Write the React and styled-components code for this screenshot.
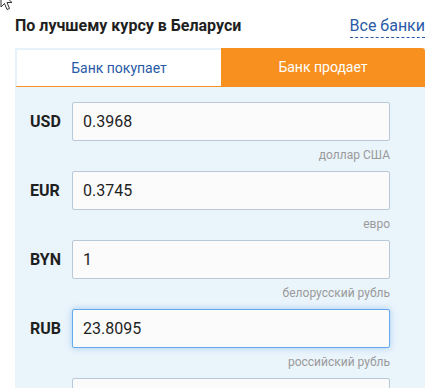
import React, { useEffect, useRef } from 'react';
import styled, { createGlobalStyle } from 'styled-components';

const GlobalStyle = createGlobalStyle`
  html, body {
    margin: 0;
    padding: 0;
    background: #ffffff;
    font-family: Roboto, 'Liberation Sans', Arial, sans-serif;
    overflow: hidden;
  }
`;

const Page = styled.div`
  position: relative;
  width: 410px;
  margin-left: 15px;
`;

const Pointer = styled.svg`
  position: absolute;
  top: -9px;
  left: -15px;
  width: 13px;
  height: 20px;
`;

const Header = styled.div`
  display: flex;
  justify-content: space-between;
  align-items: flex-start;
  padding-top: 15px;
  margin-bottom: 10px;
`;

const Title = styled.h2`
  margin: 0;
  font-size: 16px;
  line-height: 22px;
  font-weight: 700;
  color: #1f1f1f;
`;

const AllBanks = styled.a`
  font-size: 16px;
  line-height: 22px;
  color: #2a5aa6;
  text-decoration: none;
  border-bottom: 1px dashed #2a5aa6;
  cursor: pointer;
`;

const Panel = styled.section`
  background: #eaf4fb;
`;

const Tabs = styled.div`
  display: flex;
  height: 39px;
`;

const Tab = styled.button`
  flex: 1;
  border: none;
  margin: 0;
  padding: 0;
  font-family: inherit;
  font-size: 14px;
  cursor: pointer;
  background: ${(p) => (p.$active ? '#f7901e' : '#ffffff')};
  color: ${(p) => (p.$active ? '#ffffff' : '#2a5aa6')};
  border-top: ${(p) => (p.$active ? 'none' : '2px solid #e6f2fa')};
  border-left: ${(p) => (p.$active ? 'none' : '2px solid #e6f2fa')};
  border-bottom: 1px solid #f7901e;
  border-radius: ${(p) => (p.$active ? '0 3px 0 0' : '3px 0 0 0')};
`;

const Body = styled.div`
  padding: 15px 35px 0 15px;
`;

const Row = styled.div`
  display: grid;
  grid-template-columns: 42px 1fr;
  align-items: center;
  margin-bottom: 8px;
`;

const Code = styled.label`
  font-size: 16px;
  font-weight: 700;
  color: #1f1f1f;
`;

const Field = styled.input`
  box-sizing: border-box;
  width: 100%;
  height: 39px;
  padding: 0 10px;
  font-family: inherit;
  font-size: 16px;
  color: #1f1f1f;
  background: #fbfbfb;
  border: 1px solid ${(p) => (p.$focused ? '#66a9ec' : '#b9c9d8')};
  border-radius: 2px;
  box-shadow: ${(p) => (p.$focused ? '0 0 6px rgba(102, 169, 236, 0.55)' : 'none')};
  outline: none;
  caret-color: #000;
`;

const Name = styled.div`
  grid-column: 2;
  margin-top: 6px;
  text-align: right;
  font-size: 12px;
  line-height: 16px;
  color: #9a9a9a;
`;

const rates = [
  { code: 'USD', value: '0.3968', name: 'доллар США' },
  { code: 'EUR', value: '0.3745', name: 'евро' },
  { code: 'BYN', value: '1', name: 'белорусский рубль' },
  { code: 'RUB', value: '23.8095', name: 'российский рубль', focused: true },
  { code: 'PLN', value: '1.5552', name: 'польский злотый' },
];

const App = () => {
  const focusRef = useRef(null);

  useEffect(() => {
    const el = focusRef.current;
    if (el) {
      el.focus();
      el.setSelectionRange(el.value.length, el.value.length);
    }
  }, []);

  return (
    <React.Fragment>
      <GlobalStyle />
      <Page>
        <Pointer viewBox="0 0 13 20">
          <path
            d="M1 1 L1 16 L4.5 12.5 L7 18.5 L9.5 17.5 L7 11.5 L12 11.5 Z"
            fill="#ffffff"
            stroke="#333333"
            strokeWidth="1"
            strokeLinejoin="round"
          />
        </Pointer>
        <Header>
          <Title>По лучшему курсу в Беларуси</Title>
          <AllBanks>Все банки</AllBanks>
        </Header>
        <Panel>
          <Tabs>
            <Tab>Банк покупает</Tab>
            <Tab $active>Банк продает</Tab>
          </Tabs>
          <Body>
            {rates.map((r) => (
              <Row key={r.code}>
                <Code>{r.code}</Code>
                <Field
                  ref={r.focused ? focusRef : undefined}
                  $focused={r.focused}
                  defaultValue={r.value}
                />
                <Name>{r.name}</Name>
              </Row>
            ))}
          </Body>
        </Panel>
      </Page>
    </React.Fragment>
  );
};

export default App;
